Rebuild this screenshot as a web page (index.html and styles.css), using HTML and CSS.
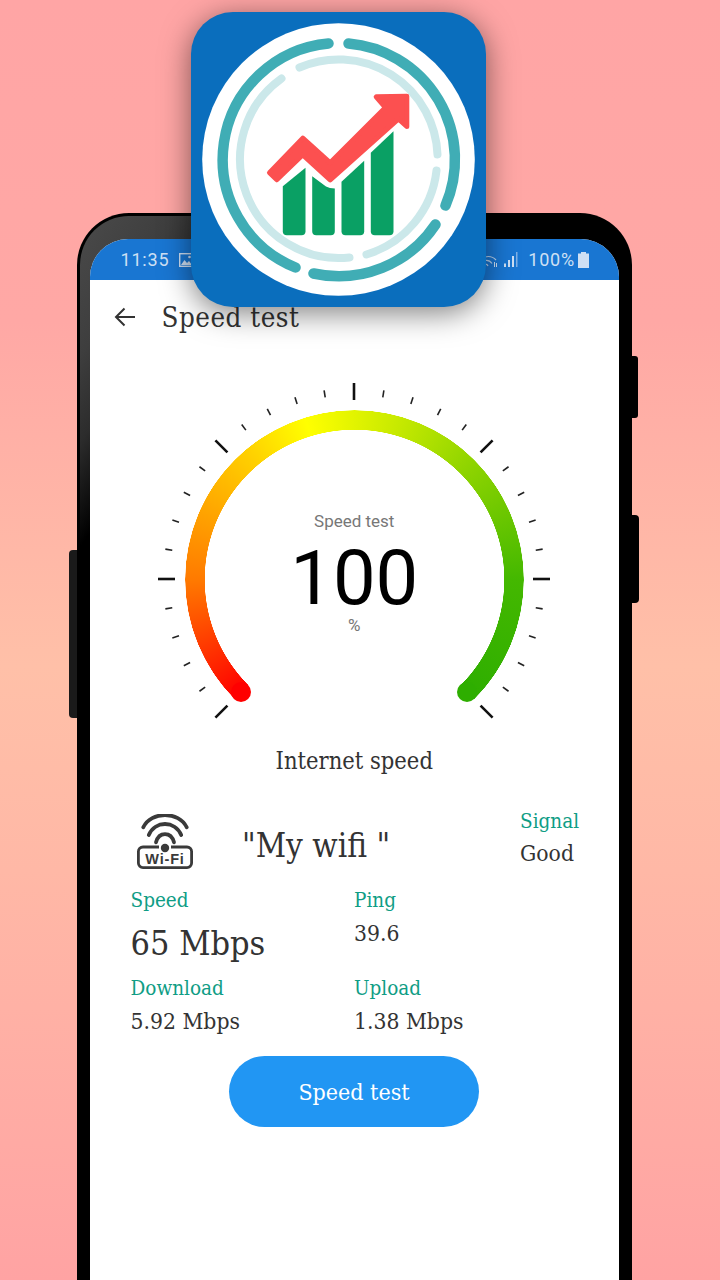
FILE: index.html
```html
<!DOCTYPE html>
<html lang="en">
<head>
<meta charset="utf-8">
<title>Speed test</title>
<link rel="stylesheet" href="styles.css">
</head>
<body>
<div class="stage">
  <div class="phone">
    <span class="key key-left"></span>
    <span class="key key-right-a"></span>
    <span class="key key-right-b"></span>
    <div class="bezel">
      <div class="screen">
        <div class="statusbar">
          <div class="status-group">
            <span>11:35</span>
            <svg class="status-img" viewBox="0 0 15 14"><rect x="0.7" y="0.7" width="13.6" height="12.6" fill="none" stroke="#cfe0f4" stroke-width="1.4"/><path d="M2 12l3.5-5 2.5 3 2-2 3 4z" fill="#cfe0f4"/><circle cx="10.5" cy="4" r="1.3" fill="#cfe0f4"/></svg>
          </div>
          <div class="status-group">
            <svg class="status-wifi" viewBox="0 0 14 16"><path d="M1 5a11 11 0 0 1 11 3M1 8.500a7 7 0 0 1 7 3M1 12a3 3 0 0 1 3 2" fill="none" stroke="#b9d3f0" stroke-width="1.200"/><path d="M10.500 10v5M12.500 11v4" stroke="#cfe0f4" stroke-width="1"/></svg>
            <svg class="status-signal" viewBox="0 0 15 15"><path d="M1 11.500h2V15H1zM5 8h2v7H5zM9 4h2v11H9z" fill="#cfe0f4"/><path d="M13 0h1.500v15H13z" fill="#7fb0e6"/></svg>
            <span class="status-pct">100%</span>
            <svg class="status-batt" viewBox="0 0 11 16"><path d="M3 0h5v1.500h3V16H0V1.500h3z" fill="#cfe0f4"/></svg>
          </div>
        </div>
        <div class="appbar">
          <svg class="back" viewBox="0 0 24 24"><path d="M22 12H3.500M11.500 3.500L3 12l8.500 8.500" fill="none" stroke="#333" stroke-width="2"/></svg>
          <h1 class="title">Speed test</h1>
        </div>
        <div class="gauge">
          <div class="arc"></div>
          <span class="cap cap-start"></span>
          <span class="cap cap-end"></span>
          <svg class="ticks" viewBox="-200 -223 400 390">
            <g class="major">
              <line y1="-196" y2="-179" transform="rotate(-135)"/><line y1="-196" y2="-179" transform="rotate(-90)"/><line y1="-196" y2="-179" transform="rotate(-45)"/><line y1="-196" y2="-179"/><line y1="-196" y2="-179" transform="rotate(45)"/><line y1="-196" y2="-179" transform="rotate(90)"/><line y1="-196" y2="-179" transform="rotate(135)"/>
            </g>
            <g class="minor">
              <line y1="-191" y2="-184" transform="rotate(-126)"/><line y1="-191" y2="-184" transform="rotate(-117)"/><line y1="-191" y2="-184" transform="rotate(-108)"/><line y1="-191" y2="-184" transform="rotate(-99)"/>
              <line y1="-191" y2="-184" transform="rotate(-81)"/><line y1="-191" y2="-184" transform="rotate(-72)"/><line y1="-191" y2="-184" transform="rotate(-63)"/><line y1="-191" y2="-184" transform="rotate(-54)"/>
              <line y1="-191" y2="-184" transform="rotate(-36)"/><line y1="-191" y2="-184" transform="rotate(-27)"/><line y1="-191" y2="-184" transform="rotate(-18)"/><line y1="-191" y2="-184" transform="rotate(-9)"/>
              <line y1="-191" y2="-184" transform="rotate(9)"/><line y1="-191" y2="-184" transform="rotate(18)"/><line y1="-191" y2="-184" transform="rotate(27)"/><line y1="-191" y2="-184" transform="rotate(36)"/>
              <line y1="-191" y2="-184" transform="rotate(54)"/><line y1="-191" y2="-184" transform="rotate(63)"/><line y1="-191" y2="-184" transform="rotate(72)"/><line y1="-191" y2="-184" transform="rotate(81)"/>
              <line y1="-191" y2="-184" transform="rotate(99)"/><line y1="-191" y2="-184" transform="rotate(108)"/><line y1="-191" y2="-184" transform="rotate(117)"/><line y1="-191" y2="-184" transform="rotate(126)"/>
            </g>
          </svg>
          <div class="readout">
            <span class="readout-label">Speed test</span>
            <span class="readout-value">100</span>
            <span class="readout-unit">%</span>
          </div>
        </div>
        <p class="caption">Internet speed</p>
        <div class="network">
          <svg class="wifi-badge" viewBox="0 0 56 56">
            <g fill="none" stroke="#3a3a3a" stroke-width="3.800" stroke-linecap="round">
              <path d="M6.300 13.300C14 -3 42 -3 49.700 13.300"/>
              <path d="M11.800 21C18 6.300 38 6.300 44.200 21"/>
              <path d="M19 28.300C22 17.500 34 17.500 37 28.300"/>
            </g>
            <circle cx="28" cy="34" r="4.200" fill="#3a3a3a"/>
            <path d="M22 33H6a4.600 4.600 0 0 0-4.600 4.600v11.500A4.600 4.600 0 0 0 6 53.700h44a4.600 4.600 0 0 0 4.600-4.600V37.600A4.600 4.600 0 0 0 50 33H34" fill="none" stroke="#3a3a3a" stroke-width="2.800"/>
            <text class="wifi-text" x="28" y="50" text-anchor="middle">Wi-Fi</text>
          </svg>
          <span class="ssid">"My wifi "</span>
          <div class="signal">
            <span class="label">Signal</span>
            <span class="value">Good</span>
          </div>
        </div>
        <div class="stats">
          <div class="stat">
            <span class="label">Speed</span>
            <span class="value value-large">65 Mbps</span>
          </div>
          <div class="stat">
            <span class="label">Ping</span>
            <span class="value">39.6</span>
          </div>
          <div class="stat">
            <span class="label">Download</span>
            <span class="value">5.92 Mbps</span>
          </div>
          <div class="stat">
            <span class="label">Upload</span>
            <span class="value">1.38 Mbps</span>
          </div>
        </div>
        <button class="test-btn" type="button">Speed test</button>
      </div>
    </div>
  </div>
  <div class="app-icon">
    <svg viewBox="-147.500 -147.500 295 295">
      <circle r="136.300" fill="#fff"/>
      <g fill="none" stroke="#40adb5" stroke-width="10.500" stroke-linecap="round">
        <path d="M-10 -116A116.500 116.500 0 0 0 -43 108"/>
        <path d="M10 -116A116.500 116.500 0 0 1 107 46"/>
        <path d="M97 65A116.500 116.500 0 0 1 -25 114"/>
      </g>
      <g fill="none" stroke="#cbe8ea" stroke-width="8" stroke-linecap="round">
        <path d="M-39 -92A99 99 0 0 1 99 -5"/>
        <path d="M98 11A99 99 0 0 1 28 95"/>
        <path d="M11 98A99 99 0 0 1 -57 -81"/>
      </g>
      <g fill="#0aa064">
        <path d="M-55.700 26.700L-33 8.300V71.700a4 4 0 0 1-4 4H-51.700a4 4 0 0 1-4-4z"/>
        <path d="M-26.300 16.700L-12.500 27Q-9 29 -3.700 29V71.700a4 4 0 0 1-4 4H-22.300a4 4 0 0 1-4-4z"/>
        <path d="M3 22.300L25.700 1.300V71.700a4 4 0 0 1-4 4H7a4 4 0 0 1-4-4z"/>
        <path d="M32.300 -6.700L55 -28.300V71.700a4 4 0 0 1-4 4H36.300a4 4 0 0 1-4-4z"/>
      </g>
      <path d="M-69 13.300L-35.700 -21.300L-8.300 3.300L47 -52L37.700 -62.700L68.300 -63.300V-33L60 -40.700L-8.300 20.300L-35.700 -4.700L-61.700 20.300z" fill="#fc5050" stroke="#fc5050" stroke-width="5" stroke-linejoin="round"/>
    </svg>
  </div>
</div>
</body>
</html>
```
FILE: styles.css
```css
* { box-sizing: border-box; }
html, body { margin: 0; padding: 0; }
body { width: 720px; height: 1280px; overflow: hidden; }
.stage {
  position: relative;
  width: 720px;
  height: 1280px;
  overflow: hidden;
  padding: 213px 0 0 77px;
  background: linear-gradient(180deg, #ffa5a5 0%, #ffa8a5 25%, #ffc0a8 52%, #ffb8a6 68%, #ffa3a3 100%);
  font-family: "DejaVu Serif Condensed", "DejaVu Serif", serif;
  color: #333;
}
.phone {
  position: relative;
  width: 555px;
  height: 1100px;
  background: #000;
  border-radius: 52px 52px 0 0;
  padding: 3px 3px 0 3px;
}
.key { position: absolute; background: #000; }
.key-left { left: -8px; top: 337px; width: 8px; height: 168px; border-radius: 4px 0 0 4px; background: #1a1a1a; }
.key-right-a { right: -6px; top: 143px; width: 6px; height: 62px; border-radius: 0 3px 3px 0; }
.key-right-b { right: -7px; top: 302px; width: 7px; height: 88px; border-radius: 0 4px 4px 0; }
.bezel {
  height: 100%;
  border-radius: 49px 49px 0 0;
  padding: 23px 10px 0 9.500px;
  background: linear-gradient(125deg, #4a4a4a 0, #3e3e3e 80px, #2c2c2c 130px, #000 190px);
}
.screen {
  height: 100%;
  background: #fff;
  border-radius: 38px 38px 0 0;
  overflow: hidden;
}
.statusbar {
  height: 41px;
  background: #1976d2;
  display: flex;
  justify-content: space-between;
  align-items: center;
  padding: 0 30px 0 31px;
  font-family: Roboto, sans-serif;
  font-size: 18px;
  letter-spacing: 0.8px;
  color: #cfe0f4;
}
.status-group { display: flex; align-items: center; }
.status-img { width: 15px; height: 14px; margin-left: 10px; }
.status-wifi { width: 14px; height: 16px; margin-right: 5px; }
.status-signal { width: 15px; height: 15px; margin-right: 10px; }
.status-pct { margin-right: 3px; }
.status-batt { width: 11px; height: 16px; }
.appbar {
  height: 76px;
  display: flex;
  align-items: center;
  padding: 0 0 2px 23px;
}
.back { width: 24px; height: 24px; }
.title {
  margin: 0 0 0 25px;
  font-size: 27.500px;
  letter-spacing: 0.5px;
  line-height: 34px;
  font-weight: 400;
  color: #333;
}
.gauge {
  position: relative;
  width: 400px;
  height: 390px;
  margin: 0 auto;
}
.arc {
  position: absolute;
  left: 30.500px;
  top: 53.500px;
  width: 339px;
  height: 339px;
  border-radius: 50%;
  background: conic-gradient(from -135deg, #ff0000 0deg, #ff7a00 45deg, #ffd000 95deg, #ffff00 118deg, #c8ea00 150deg, #8fd400 180deg, #44b800 225deg, #2eae00 270deg, transparent 270deg);
  -webkit-mask: radial-gradient(circle 169.500px at center, transparent 149.500px, #000 150px, #000 169px, transparent 169.500px);
  mask: radial-gradient(circle 169.500px at center, transparent 149.500px, #000 150px, #000 169px, transparent 169.500px);
}
.cap {
  position: absolute;
  top: 326px;
  width: 20px;
  height: 20px;
  border-radius: 50%;
}
.cap-start { left: 77px; background: #ff0000; }
.cap-end { left: 303px; background: #2eae00; }
.ticks { position: absolute; inset: 0; width: 400px; height: 390px; }
.major line { stroke: #111; stroke-width: 2.600; }
.minor line { stroke: #222; stroke-width: 1.600; }
.readout {
  position: absolute;
  left: 0;
  right: 0;
  top: 153px;
  display: flex;
  flex-direction: column;
  align-items: center;
  font-family: Roboto, sans-serif;
}
.readout-label { font-size: 17px; line-height: 24px; color: #777; }
.readout-value { font-size: 76px; line-height: 70px; color: #000; margin-top: 10px; }
.readout-unit { font-size: 17px; line-height: 20px; color: #777; margin-top: 2px; }
.caption {
  margin: 0;
  height: 30px;
  font-size: 23.500px;
  line-height: 30px;
  text-align: center;
  color: #333;
}
.network {
  display: flex;
  align-items: flex-start;
  height: 80px;
  margin-top: 29px;
  padding-left: 47.500px;
}
.wifi-badge { width: 56px; height: 56px; margin-top: 9px; }
.wifi-text { font-family: "Liberation Sans", sans-serif; font-size: 14.500px; font-weight: 700; letter-spacing: 0.8px; fill: #3a3a3a; }
.ssid { margin: 19px 0 0 49px; font-size: 33px; line-height: 44px; color: #333; }
.signal { display: flex; flex-direction: column; gap: 2px; margin: 1px 0 0 auto; width: 99px; }
.label { display: block; font-size: 20.500px; line-height: 30px; color: #0f9d85; }
.value { display: block; font-size: 22.700px; line-height: 30px; color: #333; }
.stats {
  display: grid;
  grid-template-columns: 223.500px 1fr;
  grid-template-rows: 87.500px 70px;
  padding-left: 41px;
}
.stat .value { margin-top: 3px; }
.stat .value-large { font-size: 34px; line-height: 44px; margin-top: 6px; }
.test-btn {
  display: block;
  width: 250px;
  height: 71px;
  margin: 13.500px 0 0 139.500px;
  border: 0;
  border-radius: 36px;
  background: #2196f3;
  color: #fff;
  font-family: inherit;
  font-size: 23px;
  padding: 0;
}
.app-icon {
  position: absolute;
  left: 191px;
  top: 12px;
  width: 295px;
  height: 295px;
  border-radius: 42px;
  background: #0a6ebd;
  box-shadow: 0 6px 30px rgba(0, 0, 0, 0.5);
}
.app-icon svg { display: block; width: 295px; height: 295px; }
```
